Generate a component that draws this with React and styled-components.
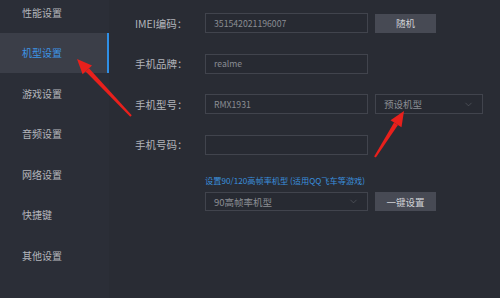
import styled, { createGlobalStyle } from "styled-components";
import { ChevronDown } from "lucide-react";

const GlobalStyle = createGlobalStyle`
    html, body {
        margin: 0;
        padding: 0;
        background: #292c34;
    }
    * {
        box-sizing: border-box;
    }
`;

const Page = styled.div`
    position: relative;
    display: flex;
    width: 500px;
    height: 298px;
    overflow: hidden;
    background: #292c34;
    font-family: "Noto Sans CJK SC", "Noto Sans", sans-serif;
    font-size: 10px;
`;

const Sidebar = styled.div`
    width: 109px;
    flex-shrink: 0;
    background: #2b2e37;
    display: flex;
    flex-direction: column;
    margin-top: -8px;
`;

const NavItem = styled.div`
    height: 40.5px;
    flex-shrink: 0;
    display: flex;
    align-items: center;
    padding-left: 22px;
    color: ${(p) => (p.$active ? "#3d95e6" : "#b4b6bc")};
    background: ${(p) => (p.$active ? "#3b3e48" : "transparent")};
    border-right: 2px solid ${(p) => (p.$active ? "#2f8fe6" : "transparent")};
`;

const Main = styled.div`
    flex: 1;
    padding: 13px 0 0 26px;
    display: flex;
    flex-direction: column;
`;

const Row = styled.div`
    display: flex;
    align-items: center;
    height: 20px;
    margin-bottom: ${(p) => p.$gap || "20.5px"};
`;

const Label = styled.div`
    width: 70px;
    flex-shrink: 0;
    color: #b2b4ba;
    font-size: 10.5px;
`;

const Field = styled.div`
    width: 163px;
    height: ${(p) => p.$h || "20px"};
    border: 1px solid #41444d;
    background: #272a32;
    color: #8a8d93;
    display: flex;
    align-items: center;
    justify-content: space-between;
    padding: 0 8px;
    font-size: 8.7px;
`;

const Select = styled(Field)`
    width: ${(p) => p.$w || "163px"};
    margin-left: ${(p) => p.$ml || "0"};
    font-size: 9.5px;
`;

const Button = styled.div`
    width: 61px;
    height: ${(p) => p.$h || "19px"};
    margin-left: 7px;
    background: #474a54;
    color: #cfd1d5;
    display: flex;
    align-items: center;
    justify-content: center;
    font-size: 9.5px;
`;

const LinkText = styled.div`
    margin-left: 70px;
    margin-top: -1px;
    color: #3a8fdc;
    font-size: 8.2px;
    line-height: 14px;
    height: 14px;
    margin-bottom: 5px;
`;

const Arrows = styled.svg`
    position: absolute;
    left: 0;
    top: 0;
    pointer-events: none;
`;

const navList = ["性能设置", "机型设置", "游戏设置", "音频设置", "网络设置", "快捷键", "其他设置"];

const Arrow = ({ x1, y1, x2, y2 }) => {
    const dx = x2 - x1;
    const dy = y2 - y1;
    const len = Math.sqrt(dx * dx + dy * dy);
    const ux = dx / len;
    const uy = dy / len;
    const headLen = 15;
    const headW = 6.5;
    const bx = x2 - ux * headLen;
    const by = y2 - uy * headLen;
    const px = -uy;
    const py = ux;
    return (
        <g>
            <polygon
                points={`${x1 + px * 1},${y1 + py * 1} ${bx + px * 2.3},${by + py * 2.3} ${bx - px * 2.3},${by - py * 2.3} ${x1 - px * 1},${y1 - py * 1}`}
                fill="#e8201c"
            />
            <polygon
                points={`${x2},${y2} ${bx + px * headW},${by + py * headW} ${bx - px * headW},${by - py * headW}`}
                fill="#e8201c"
            />
        </g>
    );
};

const App = () => {
    return (
        <Page>
            <GlobalStyle />
            <Sidebar>
                {navList.map((item, i) => (
                    <NavItem key={i} $active={i === 1}>{item}</NavItem>
                ))}
            </Sidebar>
            <Main>
                <Row>
                    <Label>IMEI编码：</Label>
                    <Field>351542021196007</Field>
                    <Button>随机</Button>
                </Row>
                <Row>
                    <Label>手机品牌：</Label>
                    <Field>realme</Field>
                </Row>
                <Row>
                    <Label>手机型号：</Label>
                    <Field>RMX1931</Field>
                    <Select $w="108px" $ml="7px">
                        预设机型
                        <ChevronDown size={11} strokeWidth={1} color="#6f727a" />
                    </Select>
                </Row>
                <Row $gap="19px">
                    <Label>手机号码：</Label>
                    <Field />
                </Row>
                <LinkText>设置90/120高帧率机型 (适用QQ飞车等游戏)</LinkText>
                <Row>
                    <Label />
                    <Select $h="19px">
                        90高帧率机型
                        <ChevronDown size={11} strokeWidth={1} color="#6f727a" />
                    </Select>
                    <Button>一键设置</Button>
                </Row>
            </Main>
            <Arrows width="500" height="298" viewBox="0 0 500 298">
                <Arrow x1={131} y1={116} x2={77} y2={59} />
                <Arrow x1={375} y1={157} x2={404} y2={111} />
            </Arrows>
        </Page>
    );
};

export default App;
